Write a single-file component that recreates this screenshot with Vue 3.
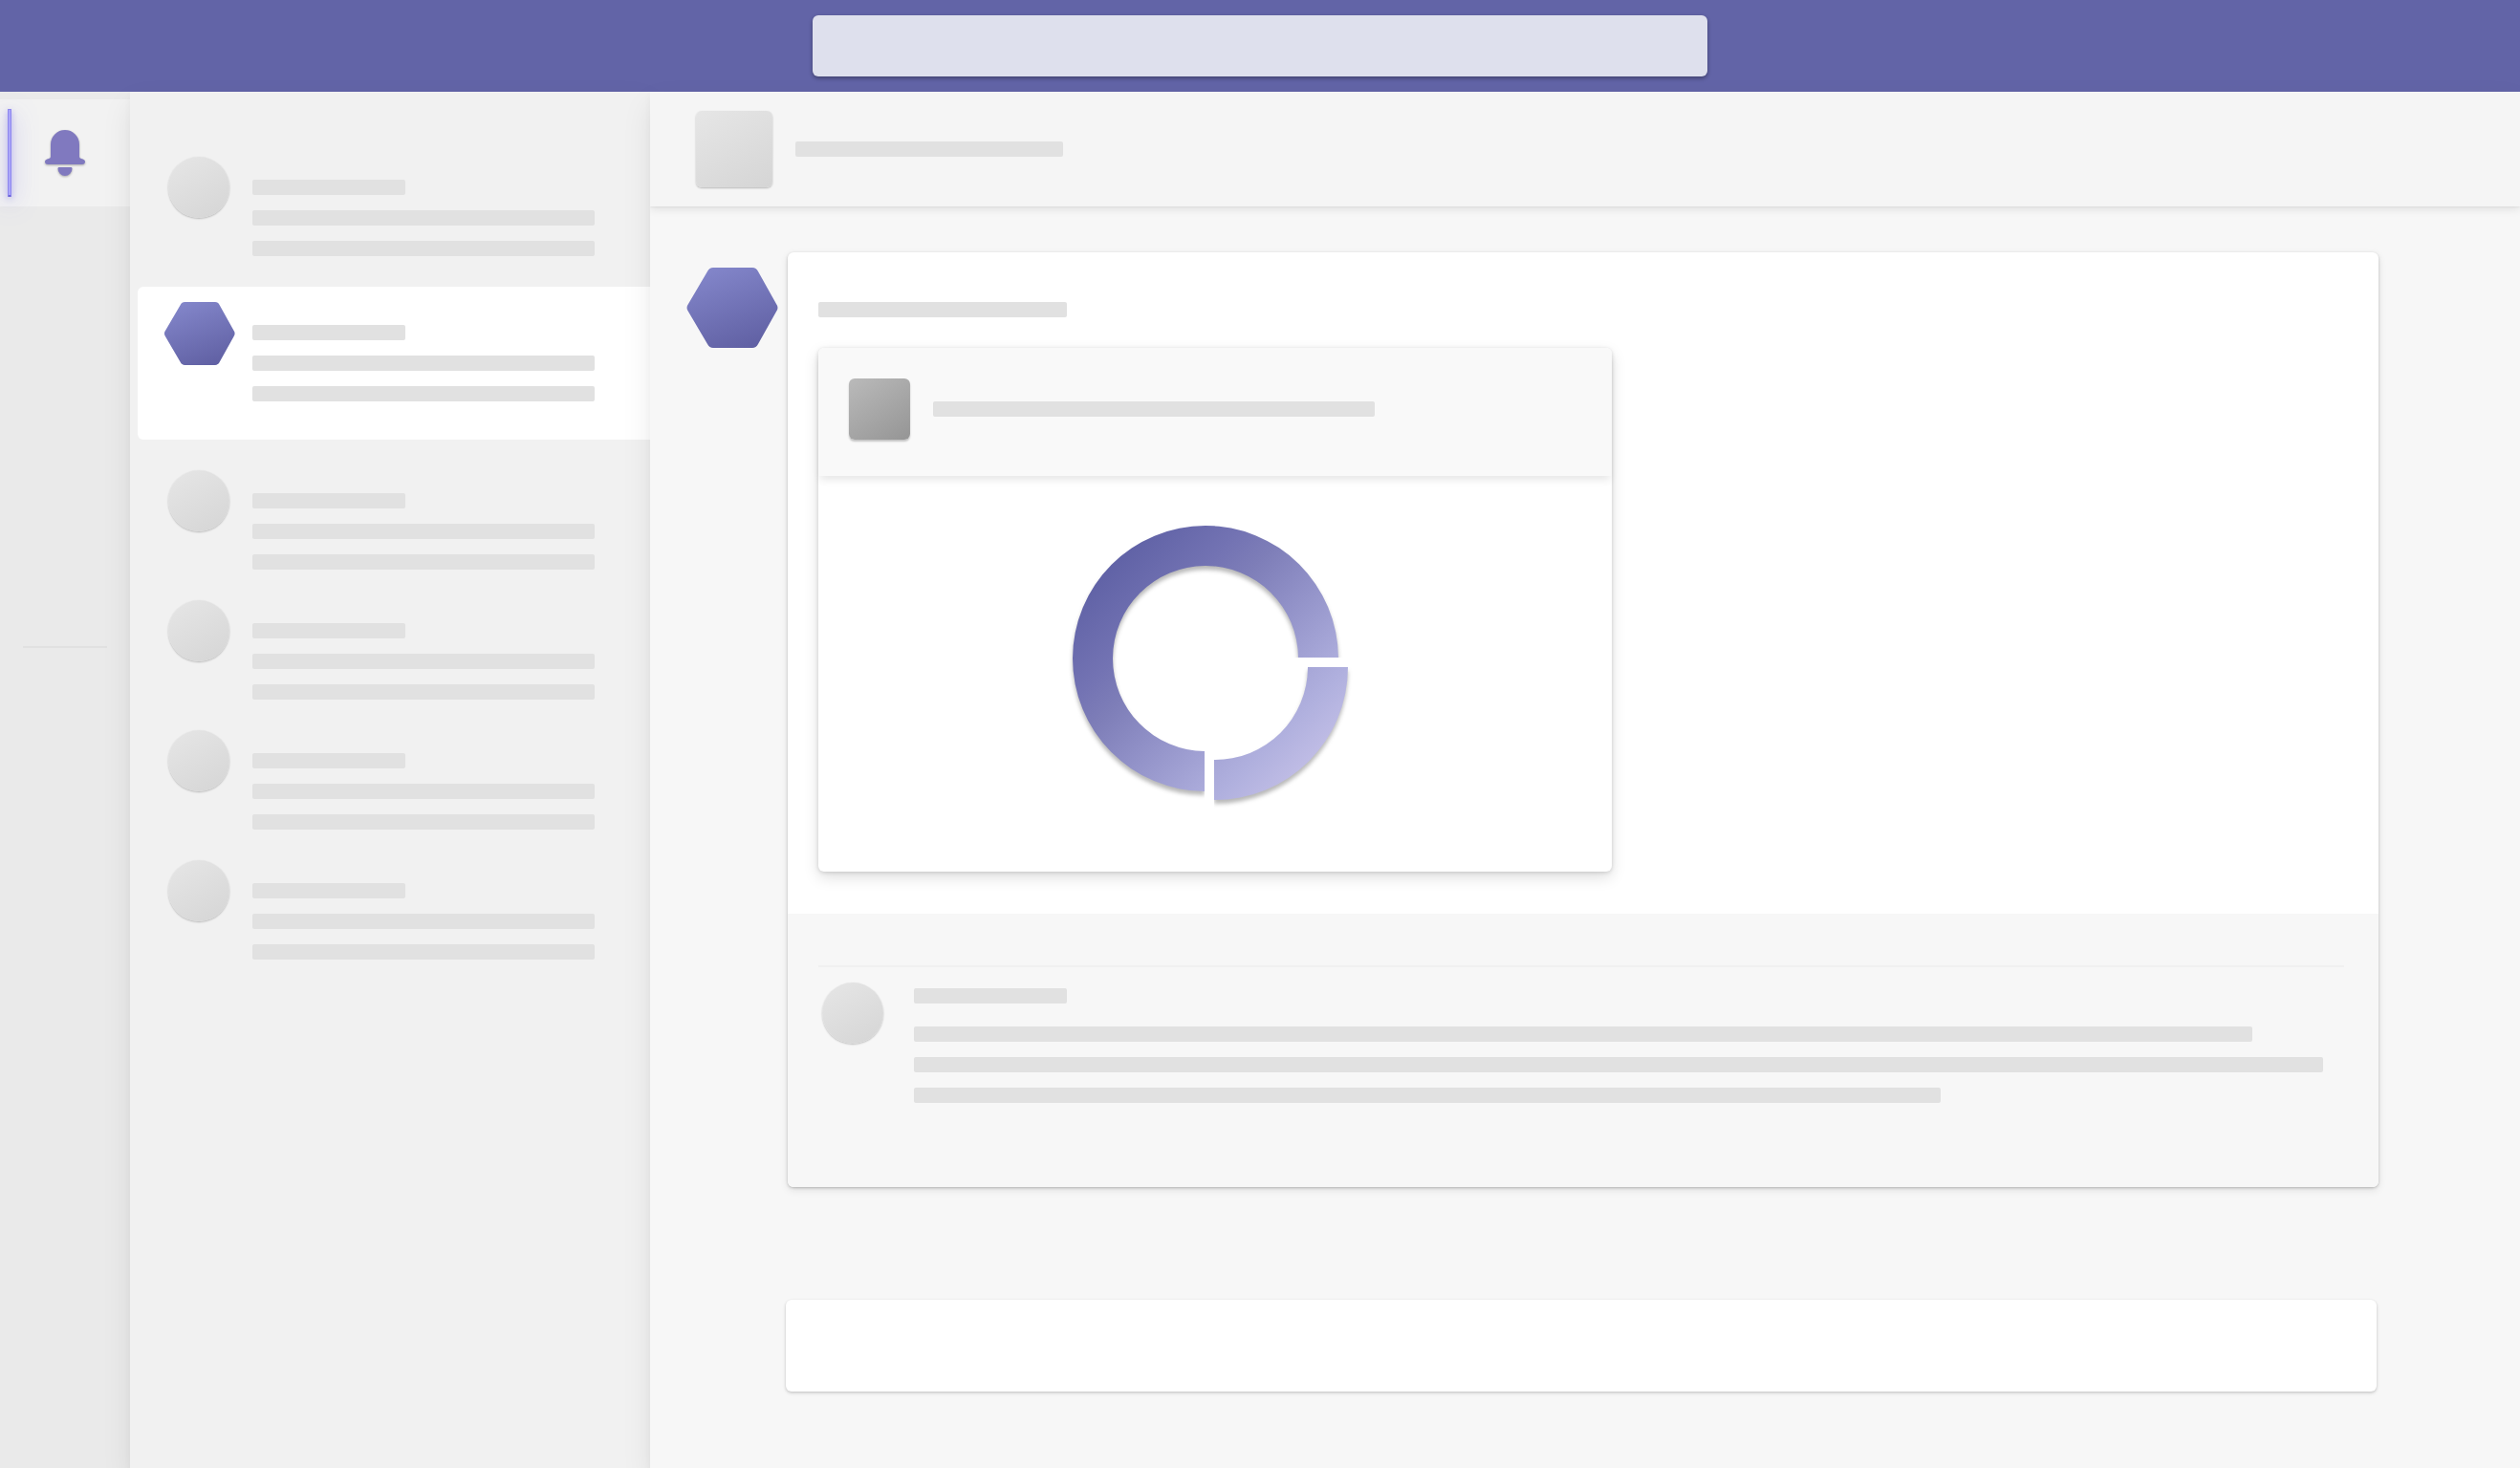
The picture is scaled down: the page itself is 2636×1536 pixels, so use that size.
<script setup>
import { ref } from 'vue'

const conversations = [
  { id: 1, selected: false },
  { id: 2, selected: true },
  { id: 3, selected: false },
  { id: 4, selected: false },
  { id: 5, selected: false },
  { id: 6, selected: false },
]

const hexagon =
  'M28 0H69Q73 0 75 4L94 38Q97 42 94 46L75 80Q73 84 69 84H28Q24 84 22 80L2 46Q-1 42 2 38L22 4Q24 0 28 0Z'

const query = ref('')
const draft = ref('')
</script>

<template>
  <div class="app">
    <svg class="defs" width="0" height="0" aria-hidden="true">
      <defs>
        <linearGradient id="hex-fill" x1="0.25" y1="0" x2="0.65" y2="1">
          <stop offset="0" stop-color="#8386ca" />
          <stop offset="1" stop-color="#6161a4" />
        </linearGradient>
      </defs>
    </svg>

    <header class="topbar">
      <input v-model="query" class="search" type="search" aria-label="Search" />
    </header>

    <div class="workspace">
      <nav class="rail">
        <button class="rail-item" type="button" aria-label="Activity">
          <span class="indicator"></span>
          <svg class="bell" width="42" height="48" viewBox="0 0 42 48" aria-hidden="true">
            <path d="M6 15a15 15 0 0 1 30 0V28Q36 29.500 38 30C40.500 30.500 42 31.500 42 33A3 3 0 0 1 39 36H3A3 3 0 0 1 0 33C0 31.500 1.500 30.500 4 30Q6 29.500 6 28Z" />
            <path d="M14.500 39H27.500Q28.500 39 28.500 40.500A7.500 7.500 0 0 1 13.500 40.500Q13.500 39 14.500 39Z" />
          </svg>
        </button>
        <hr class="rail-divider" />
      </nav>

      <aside class="sidebar">
        <ul class="list">
          <li
            v-for="item in conversations"
            :key="item.id"
            class="row"
            :class="{ selected: item.selected }"
          >
            <div class="row-icon">
              <svg
                v-if="item.selected"
                width="76"
                height="66"
                viewBox="-2 0 98 84"
                preserveAspectRatio="none"
                aria-hidden="true"
              >
                <path :d="hexagon" fill="url(#hex-fill)" />
              </svg>
              <span v-else class="avatar"></span>
            </div>
            <div class="row-lines">
              <span class="bar short"></span>
              <span class="bar"></span>
              <span class="bar"></span>
            </div>
          </li>
        </ul>
      </aside>

      <main class="main">
        <header class="main-header">
          <span class="team-icon"></span>
          <span class="bar title-bar"></span>
        </header>

        <section class="message">
          <svg class="sender" width="96" height="84" viewBox="0 0 96 84" aria-hidden="true">
            <path :d="hexagon" fill="url(#hex-fill)" />
          </svg>

          <article class="card">
            <div class="card-body">
              <span class="bar name-bar"></span>
              <div class="attachment">
                <div class="attachment-header">
                  <span class="attachment-icon"></span>
                  <span class="bar attachment-bar"></span>
                </div>
                <div class="chart">
                  <svg width="342" height="340" viewBox="0 0 342 340" aria-hidden="true">
                    <defs>
                      <linearGradient id="large-fill" gradientUnits="userSpaceOnUse" x1="62" y1="70" x2="232" y2="240">
                        <stop offset="0" stop-color="#6062a6" />
                        <stop offset="0.3" stop-color="#7373b3" />
                        <stop offset="0.45" stop-color="#7e7eb8" />
                        <stop offset="0.65" stop-color="#8f8fc6" />
                        <stop offset="1" stop-color="#adaddc" />
                      </linearGradient>
                      <linearGradient id="small-fill" gradientUnits="userSpaceOnUse" x1="216" y1="224" x2="269" y2="277">
                        <stop offset="0" stop-color="#a5a5d6" />
                        <stop offset="0.45" stop-color="#b0b0de" />
                        <stop offset="1" stop-color="#bfbce5" />
                      </linearGradient>
                      <clipPath id="large-clip">
                        <path d="M0 0H342V168H160V340H0Z" />
                      </clipPath>
                      <clipPath id="small-clip">
                        <path d="M170 178H342V340H170Z" />
                      </clipPath>
                    </defs>
                    <g clip-path="url(#large-clip)">
                      <path
                        class="slice"
                        fill="url(#large-fill)"
                        d="M300 168A139 139 0 1 0 160 308V266A97 97 0 1 1 258 168Z"
                      />
                    </g>
                    <g clip-path="url(#small-clip)">
                      <path
                        class="slice"
                        fill="url(#small-fill)"
                        d="M310 178A139 139 0 0 1 170 317V275A97 97 0 0 0 268 178Z"
                      />
                    </g>
                  </svg>
                </div>
              </div>
            </div>

            <div class="replies">
              <hr class="reply-divider" />
              <div class="reply">
                <span class="avatar"></span>
                <div class="reply-lines">
                  <span class="bar short"></span>
                  <span class="bar line-one"></span>
                  <span class="bar line-two"></span>
                  <span class="bar line-three"></span>
                </div>
              </div>
            </div>
          </article>
        </section>

        <input v-model="draft" class="compose" type="text" aria-label="New message" />
      </main>
    </div>
  </div>
</template>

<style>
body {
  margin: 0;
}
</style>

<style scoped>
.app,
.app * {
  box-sizing: border-box;
}

.app {
  display: flex;
  flex-direction: column;
  min-height: 100vh;
  background: #f7f7f7;
  font-family: "Open Sans", "Liberation Sans", sans-serif;
  overflow: hidden;
}

.defs {
  position: absolute;
}

.topbar {
  display: flex;
  justify-content: center;
  height: 96px;
  padding: 16px;
  background: #6264a7;
}

.search,
.compose {
  border: 0;
  outline: 0;
  appearance: none;
  border-radius: 6px;
  font: inherit;
  font-size: 24px;
  padding: 0 24px;
}

.search {
  width: 936px;
  max-width: 100%;
  height: 64px;
  background: #dee0ed;
  box-shadow: 0 2px 4px rgba(0, 0, 0, 0.35);
}

.workspace {
  display: flex;
  flex: 1;
}

.rail {
  flex: 0 0 136px;
  padding-top: 8px;
  background: #eaeaea;
}

.rail-item {
  position: relative;
  display: flex;
  align-items: center;
  justify-content: center;
  width: 100%;
  height: 112px;
  padding: 0;
  border: 0;
  background: #f2f2f2;
}

.indicator {
  position: absolute;
  left: 8px;
  top: 10px;
  width: 4px;
  height: 92px;
  border: 1px solid #8f88ee;
  border-bottom: 2px solid #6f67d8;
  border-radius: 1px;
  background: #aaa5fa;
  box-shadow: 0 2px 6px rgba(98, 90, 230, 0.4), 0 6px 24px rgba(98, 90, 230, 0.6);
}

.bell {
  fill: #8079bf;
  filter: drop-shadow(0 1px 1px rgba(0, 0, 0, 0.3));
}

.rail-divider {
  height: 2px;
  margin: 460px 24px 0;
  border: 0;
  background: #e1e1e1;
}

.sidebar {
  position: relative;
  z-index: 1;
  flex: 0 0 544px;
  background: #f1f1f1;
  box-shadow: 0 14px 30px rgba(0, 0, 0, 0.08), 0 4px 8px rgba(0, 0, 0, 0.04);
}

.list {
  margin: 0;
  padding: 52px 0 0 8px;
  list-style: none;
}

.row {
  display: flex;
  gap: 12px;
  height: 136px;
  padding: 16px 58px 0 20px;
}

.row.selected {
  height: 160px;
  margin: 16px 0;
  border-radius: 6px 0 0 6px;
  background: #fff;
}

.row-icon {
  display: flex;
  justify-content: center;
  flex: 0 0 88px;
  align-items: flex-start;
}

.row-lines {
  display: flex;
  flex: 1;
  flex-direction: column;
  gap: 16px;
  padding-top: 24px;
}

.avatar {
  flex: none;
  width: 64px;
  height: 64px;
  border-radius: 50%;
  background: linear-gradient(150deg, #e6e6e6, #d5d5d5);
  box-shadow: 0 1px 2px rgba(0, 0, 0, 0.24);
}

.bar {
  display: block;
  flex: none;
  max-width: 100%;
  height: 16px;
  border-radius: 2px;
  background: #e1e1e1;
}

.short {
  width: 160px;
}

.main {
  position: relative;
  z-index: 2;
  flex: 1;
  min-width: 0;
  background: #f7f7f7;
  box-shadow: 0 14px 30px rgba(0, 0, 0, 0.08), 0 4px 8px rgba(0, 0, 0, 0.04);
}

.main-header {
  display: flex;
  gap: 24px;
  height: 120px;
  padding: 20px 48px;
  background: #f5f5f5;
  box-shadow: 0 4px 8px rgba(0, 0, 0, 0.08), 0 1px 2px rgba(0, 0, 0, 0.05);
  clip-path: inset(0 0 -24px 0);
}

.team-icon {
  width: 80px;
  height: 80px;
  border-radius: 6px;
  background: linear-gradient(150deg, #e6e6e6, #d5d5d5);
  box-shadow: 0 1px 2px rgba(0, 0, 0, 0.24);
}

.title-bar {
  width: 280px;
  margin-top: 32px;
}

.message {
  display: flex;
  gap: 10px;
  padding: 48px 148px 0 38px;
}

.sender {
  flex: none;
  margin-top: 16px;
}

.card {
  flex: 1;
  min-width: 0;
  border-radius: 6px;
  background: #fff;
  box-shadow: 0 1px 3px rgba(0, 0, 0, 0.22), 0 3px 8px rgba(0, 0, 0, 0.1);
}

.card-body {
  padding: 52px 32px 44px;
}

.name-bar {
  width: 260px;
}

.attachment {
  width: 830px;
  max-width: 100%;
  margin-top: 32px;
  border-radius: 6px;
  background: #fff;
  box-shadow: 0 1px 4px rgba(0, 0, 0, 0.15), 0 6px 16px rgba(0, 0, 0, 0.13);
}

.attachment-header {
  display: flex;
  align-items: center;
  gap: 24px;
  height: 134px;
  padding: 32px 32px 38px;
  border-radius: 6px 6px 0 0;
  background: #f9f9f9;
  box-shadow: 0 6px 8px -2px rgba(0, 0, 0, 0.1);
}

.attachment-icon {
  width: 64px;
  height: 64px;
  border-radius: 6px;
  background: linear-gradient(145deg, #bababa, #959595);
  box-shadow: 0 2px 2px rgba(0, 0, 0, 0.22);
}

.attachment-bar {
  width: 462px;
}

.chart {
  display: flex;
  justify-content: center;
  padding: 22px 0 52px;
}

.slice {
  filter: drop-shadow(0 4px 2px rgba(0, 0, 0, 0.28));
}

.replies {
  height: 286px;
  padding: 54px 36px 0 32px;
  border-radius: 0 0 6px 6px;
  background: #f7f7f7;
}

.reply-divider {
  height: 2px;
  margin: 0;
  border: 0;
  background: #f1f1f1;
}

.reply {
  display: flex;
  gap: 32px;
  padding: 16px 0 0 4px;
}

.reply-lines {
  display: flex;
  flex: 1;
  flex-direction: column;
  gap: 16px;
  min-width: 0;
  padding-top: 6px;
}

.line-one {
  width: 1400px;
  margin-top: 8px;
}

.line-two {
  width: 1474px;
}

.line-three {
  width: 1074px;
}

.compose {
  display: block;
  width: calc(100% - 292px);
  height: 96px;
  margin: 118px 150px 80px 142px;
  background: #fff;
  box-shadow: 0 1px 3px rgba(0, 0, 0, 0.16), 0 2px 4px rgba(0, 0, 0, 0.08);
}
</style>
